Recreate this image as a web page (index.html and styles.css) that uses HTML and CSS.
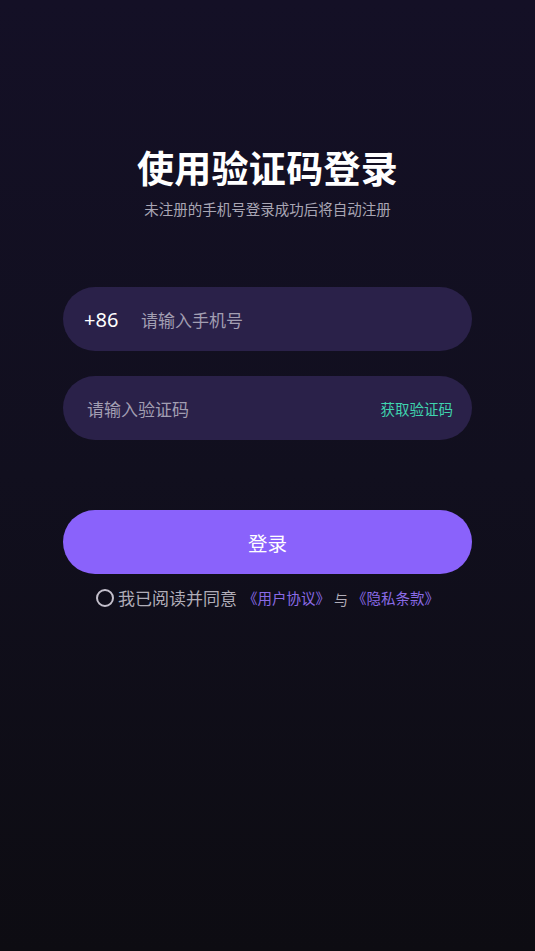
FILE: index.html
```html
<!DOCTYPE html>
<html lang="zh-CN">
<head>
<meta charset="utf-8">
<title>使用验证码登录</title>
<link rel="stylesheet" href="styles.css">
</head>
<body>
<main class="page">
  <header class="head">
    <h1 class="title">使用验证码登录</h1>
    <p class="subtitle">未注册的手机号登录成功后将自动注册</p>
  </header>
  <form class="form">
    <div class="field">
      <span class="prefix">+86</span>
      <span class="placeholder">请输入手机号</span>
    </div>
    <div class="field field-code">
      <span class="placeholder">请输入验证码</span>
      <span class="get-code">获取验证码</span>
    </div>
    <button type="button" class="submit">登录</button>
    <div class="agree">
      <span class="radio"></span>
      <span class="agree-text">我已阅读并同意</span>
      <span class="link">《用户协议》</span>
      <span class="and">与</span>
      <span class="link">《隐私条款》</span>
    </div>
  </form>
</main>
</body>
</html>
```
FILE: styles.css
```css
html, body {
  margin: 0;
  padding: 0;
  height: 100%;
}
body {
  background: linear-gradient(180deg, #141026 0%, #110f1e 50%, #0d0c12 100%);
  font-family: "Noto Sans CJK SC", "Noto Sans", sans-serif;
  color: #fff;
  min-height: 951px;
}
.page {
  width: 409px;
  margin: 0 auto;
  padding-top: 141px;
}
.head {
  text-align: center;
}
.title {
  margin: 0;
  font-size: 37px;
  font-weight: 700;
  line-height: 52px;
  letter-spacing: 0.3px;
}
.subtitle {
  margin: 6px 0 0;
  font-size: 14.5px;
  line-height: 20px;
  color: #a9a6b4;
}
.form {
  margin-top: 68px;
  display: flex;
  flex-direction: column;
}
.field {
  height: 64px;
  border-radius: 32px;
  background: #2a2149;
  display: flex;
  align-items: center;
  padding: 0 19px 0 21px;
  box-sizing: border-box;
}
.field + .field {
  margin-top: 25px;
}
.prefix {
  font-family: "Noto Sans", sans-serif;
  font-size: 20px;
  color: #fff;
  width: 57px;
}
.placeholder {
  font-size: 17px;
  color: #a29eb2;
}
.field-code {
  justify-content: space-between;
  padding-left: 24px;
}
.get-code {
  font-size: 14.5px;
  color: #3fd4ae;
}
.submit {
  margin-top: 70px;
  height: 64px;
  border: 0;
  border-radius: 32px;
  background: #8a62fb;
  color: #fff;
  font-family: "Noto Sans CJK SC", sans-serif;
  font-size: 19.5px;
  padding: 0;
}
.agree {
  margin-top: 11px;
  display: flex;
  align-items: center;
  justify-content: center;
  line-height: 24px;
}
.radio {
  width: 14px;
  height: 14px;
  border: 2px solid #c4c0cc;
  border-radius: 50%;
  margin-right: 4px;
}
.agree-text {
  font-size: 17px;
  color: #b0adb8;
  margin-right: 6px;
}
.link {
  font-size: 14.5px;
  color: #8a6be6;
}
.and {
  font-size: 14px;
  color: #b0adb8;
  margin: 2px 4px 0;
}
```
